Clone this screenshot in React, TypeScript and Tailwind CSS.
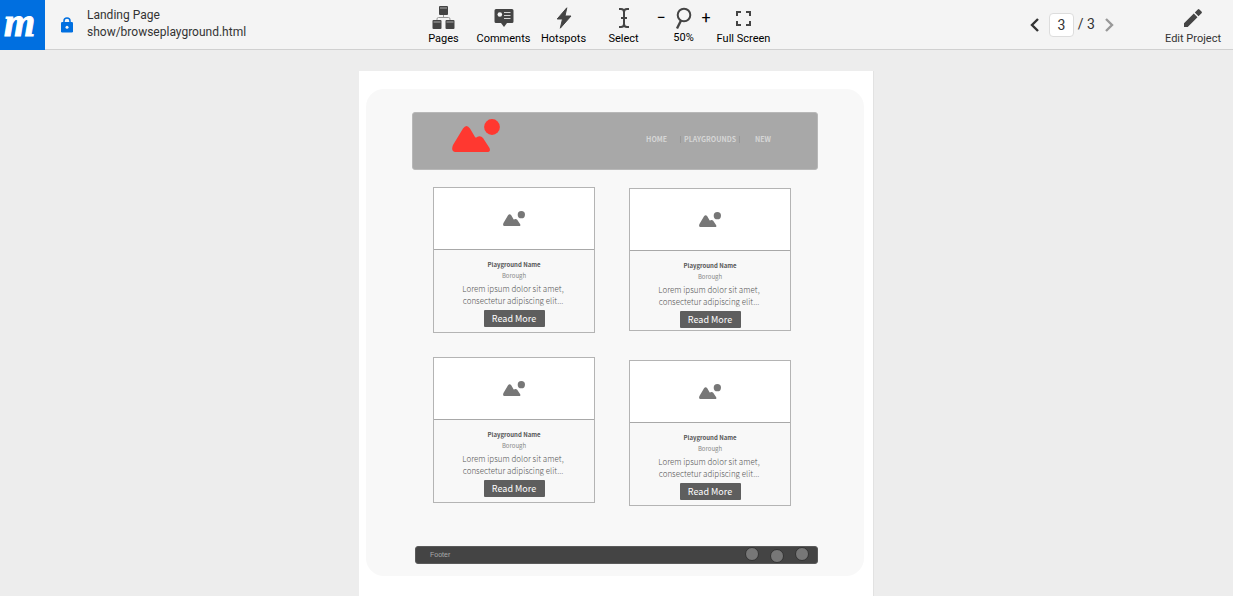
import type { ReactNode } from "react";

type SvgProps = { className?: string };

function PagesIcon() {
  return (
    <svg width="23" height="24" viewBox="0 0 23 24" className="fill-[#444]" aria-hidden="true">
      <rect x="7" y="0" width="9" height="9" rx="1" />
      <path d="M8 2h7" stroke="#aaa" fill="none" />
      <path d="M11.500 9v2M5 14v-1q0-1.500 1.500-1.500h10q1.500 0 1.500 1.500v1" stroke="#999" fill="none" />
      <rect x="0.500" y="14" width="9" height="9" rx="1" />
      <rect x="13.500" y="14" width="9" height="9" rx="1" />
      <path d="M1.500 16h7M14.500 16h7" stroke="#aaa" fill="none" />
    </svg>
  );
}

function CommentsIcon() {
  return (
    <svg width="20" height="20" viewBox="0 0 20 20" aria-hidden="true">
      <path d="M2 1h16q1.500 0 1.500 1.500v11q0 1.500-1.500 1.500h-5l-3 4-3-4H2q-1.500 0-1.500-1.500v-11Q.5 1 2 1z" fill="#444" />
      <circle cx="5.800" cy="6.500" r="2.300" fill="#f4f4f4" />
      <path d="M10 4.500h6.500M10 7.500h6.500M10 10.500h6.500" stroke="#d4d4d4" strokeWidth="1.200" />
    </svg>
  );
}

function BoltIcon() {
  return (
    <svg width="16" height="22" viewBox="0 0 16 22" aria-hidden="true">
      <path d="M10.800.8 1.200 12h5.300L4.300 21.200 15 9H9z" fill="#444" stroke="#444" strokeLinejoin="round" />
    </svg>
  );
}

function SelectIcon() {
  return (
    <svg width="12" height="20" viewBox="0 0 12 20" fill="none" stroke="#444" strokeWidth="2" aria-hidden="true">
      <path d="M1 1h2q3 0 3 3v12q0 3-3 3H1M11 1H9Q6 1 6 4M6 16q0 3 3 3h2M3 10h6" />
    </svg>
  );
}

function MagnifierIcon() {
  return (
    <svg width="17" height="22" viewBox="0 0 17 22" fill="none" stroke="#444" aria-hidden="true">
      <circle cx="9" cy="8" r="6.300" strokeWidth="2" />
      <path d="M6 13.500 2 21.500" strokeWidth="2.400" />
    </svg>
  );
}

function FullScreenIcon() {
  return (
    <svg width="15" height="15" viewBox="0 0 15 15" fill="none" stroke="#444" strokeWidth="2" aria-hidden="true">
      <path d="M1 5V1h4M10 1h4v4M14 10v4h-4M5 14H1v-4" />
    </svg>
  );
}

function LockIcon() {
  return (
    <svg width="12" height="16" viewBox="0 0 12 16" aria-hidden="true">
      <path d="M3 7V4a3 3 0 0 1 6 0v3" fill="none" stroke="#006fe0" strokeWidth="1.500" />
      <rect y="5" width="12" height="10.500" rx="1.300" fill="#006fe0" />
      <circle cx="6" cy="10.300" r="1.500" fill="#f4f4f4" />
    </svg>
  );
}

function PencilIcon() {
  return (
    <svg width="18" height="18" viewBox="0 0 18 18" fill="#444" aria-hidden="true">
      <path d="M0 14.300V18h3.700L13.500 8.200 9.800 4.500zM10.800 3.500l3.700 3.700 3-3q.8-.8 0-1.600L15.400.5q-.8-.8-1.600 0z" />
    </svg>
  );
}

function Chevron({ d, color }: { d: string; color: string }) {
  return (
    <svg width="9" height="14" viewBox="0 0 9 14" fill="none" stroke={color} strokeWidth="2.400" aria-hidden="true">
      <path d={d} />
    </svg>
  );
}

function Mountains({ className }: SvgProps) {
  return (
    <svg viewBox="0 0 48 33" className={className} fill="currentColor" aria-hidden="true">
      <path d="M1 26 11 9.500q3.500-5 7 0l5 8.500q1 1 2 0q3.500-2 6 1l6.500 10q1.500 4-2.500 4H3.500Q-1.500 32.500 1 26z" />
      <circle cx="40" cy="8" r="7.900" />
    </svg>
  );
}

function Tool({ label, children }: { label: string; children: ReactNode }) {
  return (
    <button className="flex w-[60px] flex-col items-center whitespace-nowrap pt-1.5">
      <span className="flex h-6 items-center">{children}</span>
      <span className="text-[11px] leading-[18px] text-black">{label}</span>
    </button>
  );
}

function Toolbar() {
  return (
    <header className="grid h-[50px] grid-cols-[1fr_auto_1fr] border-b border-[#d0d0d0] bg-[#f4f4f4] text-[#333]">
      <div className="flex items-center">
        <a
          href="#home"
          aria-label="Home"
          className="-mb-px flex h-[50px] w-[45px] items-center justify-center bg-[#006fe0] pb-1 pr-1.5 font-['Liberation_Serif'] text-[40px] font-bold italic leading-[46px] text-white [-webkit-text-stroke:1px_white]"
        >
          m
        </a>
        <span className="pl-4"><LockIcon /></span>
        <div className="whitespace-nowrap pb-0.5 pl-3.5 text-[12px] leading-[17px]">
          <div>Landing Page</div>
          <div>show/browseplayground.html</div>
        </div>
      </div>
      <nav className="flex pr-[46px]">
        <Tool label="Pages"><PagesIcon /></Tool>
        <Tool label="Comments"><CommentsIcon /></Tool>
        <Tool label="Hotspots"><BoltIcon /></Tool>
        <Tool label="Select"><SelectIcon /></Tool>
        <div className="flex w-[60px] flex-col items-center pt-1.5 text-black">
          <div className="flex h-6 items-center gap-2">
            <button aria-label="Zoom out" className="w-3 text-[16px] leading-6">−</button>
            <MagnifierIcon />
            <button aria-label="Zoom in" className="w-3 text-[16px] leading-6">+</button>
          </div>
          <span className="text-[11px] leading-4">50%</span>
        </div>
        <Tool label="Full Screen"><FullScreenIcon /></Tool>
      </nav>
      <div className="flex items-center justify-end">
        <button aria-label="Previous page"><Chevron d="M8 1 2 7l6 6" color="#333" /></button>
        <input
          aria-label="Page number"
          defaultValue="3"
          className="ml-2.5 mr-1 h-6 w-[25px] rounded-sm border border-[#ddd] bg-white text-center text-[14px]"
        />
        <span className="text-[14px]">/ 3</span>
        <button aria-label="Next page" className="ml-2.5"><Chevron d="m1 1 6 6-6 6" color="#999" /></button>
        <button className="ml-[51px] mr-3 flex flex-col items-center self-start whitespace-nowrap pt-1.5">
          <span className="flex h-6 items-center"><PencilIcon /></span>
          <span className="text-[11px] leading-[18px]">Edit Project</span>
        </button>
      </div>
    </header>
  );
}

function Card({ compact = false }: { compact?: boolean }) {
  return (
    <article
      className={`flex flex-col items-center border border-[#b4b4b4] text-center ${compact ? "pb-0.5" : "pb-[5px]"}`}
    >
      <div className="flex h-[62px] w-full items-center justify-center border-b border-[#a8a8a8] bg-white">
        <Mountains className="w-[22px] text-[#777]" />
      </div>
      <h2 className="mt-2 text-[6px] font-bold leading-[13px] text-[#555]">Playground Name</h2>
      <p className="text-[6px] leading-[10px] text-[#888]">Borough</p>
      <p className="mt-0.5 w-28 pr-0.5 text-[8px] font-light leading-3 text-[#555]">
        Lorem ipsum dolor sit amet, consectetur adipiscing elit...
      </p>
      <button className="mt-[3px] h-[17px] w-[61px] rounded-[1px] bg-[#5e5e5e] text-[9px] leading-[17px] text-white">
        Read More
      </button>
    </article>
  );
}

function Footer() {
  return (
    <footer className="ml-[49px] mr-[46px] mt-10 flex h-[18px] items-start justify-between rounded-[3px] border border-[#5a5a5a] bg-[#444] pl-3.5 pr-2">
      <span className="font-['Liberation_Sans'] text-[7px] leading-4 text-[#aaa]">Footer</span>
      <div className="flex h-full gap-[11px]">
        <span className="size-3.5 rounded-full border border-[#333] bg-[#777]" />
        <span className="size-3.5 self-end rounded-full border border-[#333] bg-[#777]" />
        <span className="size-3.5 rounded-full border border-[#333] bg-[#777]" />
      </div>
    </footer>
  );
}

export default function App() {
  return (
    <div className="flex min-h-screen flex-col bg-[#ededed] font-[Roboto,sans-serif]">
      <Toolbar />
      <main className="flex flex-1 flex-col items-center pt-[21px]">
        <div className="w-full max-w-[515px] flex-1 border-r border-[#e2e2e2] bg-white pb-5 pl-[7px] pr-[9px] pt-[18px] font-['Noto_Sans_CJK_JP',sans-serif]">
          <div className="rounded-[18px] bg-[#f8f8f8] pb-3 pt-[23px]">
            <header className="mx-[46px] flex h-[58px] items-center justify-between rounded-[3px] border border-[#b8b8b8] bg-[#a8a8a8] pl-[39px] pr-[46px]">
              <Mountains className="mb-3 w-12 text-[#ff3830]" />
              <nav className="flex items-center pb-1 text-[7px] font-bold leading-none text-[#d6d6d6]">
                <a href="#home" className="pr-[13px]">HOME</a>
                <a href="#playgrounds" className="border-x border-[#989898] px-[3px]">PLAYGROUNDS</a>
                <a href="#new" className="pl-[15px]">NEW</a>
              </nav>
            </header>
            <div className="ml-[67px] mt-[17px] grid w-[358px] grid-cols-2 gap-x-[34px]">
              <div className="flex flex-col gap-6">
                <Card />
                <Card />
              </div>
              <div className="flex flex-col gap-[29px] pt-px">
                <Card compact />
                <Card />
              </div>
            </div>
            <Footer />
          </div>
        </div>
      </main>
    </div>
  );
}
